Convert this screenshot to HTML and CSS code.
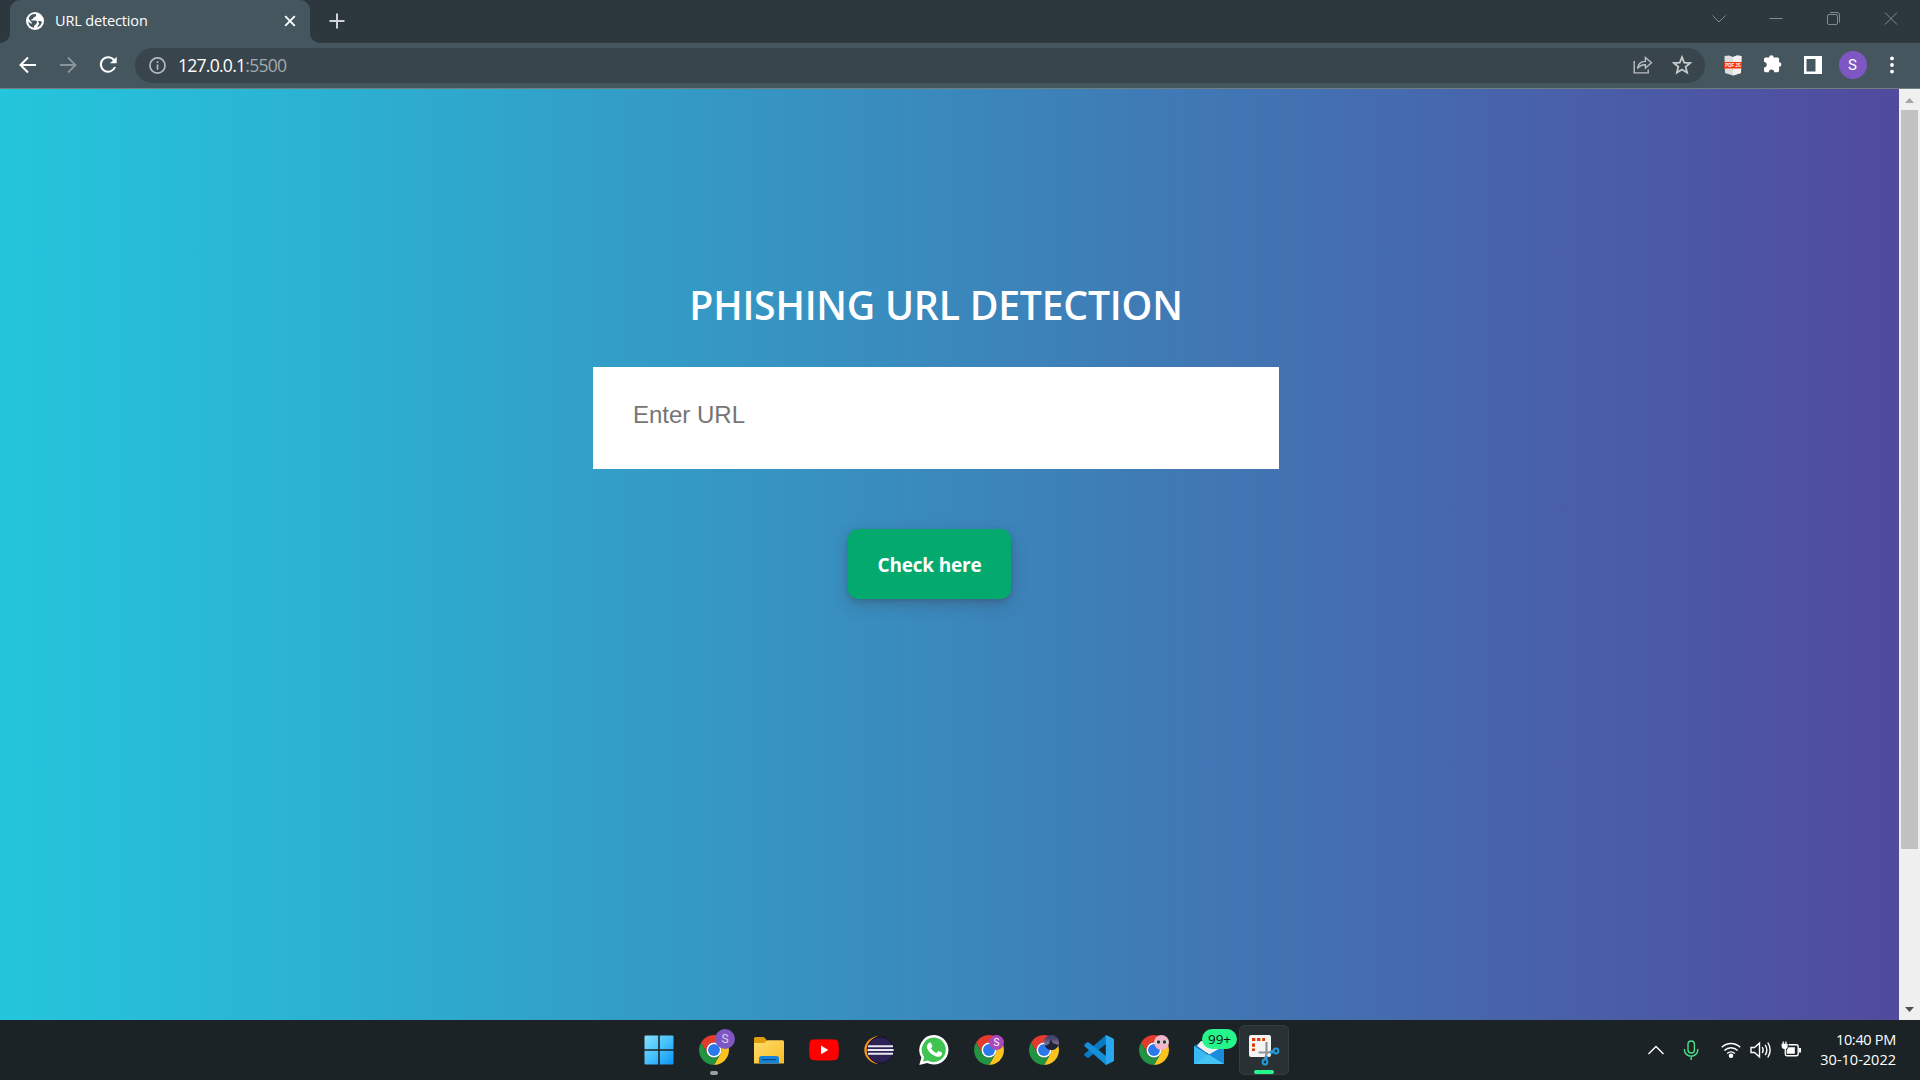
FILE: index.html
```html
<!DOCTYPE html>
<html lang="en">
<head>
<meta charset="utf-8">
<title>URL detection</title>
<link rel="stylesheet" href="styles.css">
</head>
<body>
<svg class="defs" width="0" height="0" aria-hidden="true">
  <symbol id="chrome" viewBox="0 0 48 48">
    <path fill="#e33b2e" d="M24 12H44.78A24 24 0 0 0 3.22 12L13.61 30A12 12 0 0 1 24 12Z"/>
    <path fill="#fcc31e" d="M44.78 12A24 24 0 0 1 24 48L34.39 30A12 12 0 0 0 24 12Z"/>
    <path fill="#229342" d="M24 48A24 24 0 0 1 3.22 12L13.61 30A12 12 0 0 0 34.39 30Z"/>
    <circle cx="24" cy="24" r="12" fill="#fff"/>
    <circle cx="24" cy="24" r="9.5" fill="#2b78ec"/>
  </symbol>
  <linearGradient id="win" x1="0" y1="0" x2="1" y2="1"><stop offset="0" stop-color="#88e0ff"/><stop offset=".5" stop-color="#45c2fb"/><stop offset="1" stop-color="#0b93f5"/></linearGradient>
  <linearGradient id="folder" x1="0" y1="0" x2="1" y2="1"><stop offset="0" stop-color="#ffdc6b"/><stop offset="1" stop-color="#f9bd25"/></linearGradient>
</svg>

<header class="tabstrip">
  <div class="strip-start"><i class="curve curve-left"></i></div>
  <div class="tab">
    <svg class="favicon" viewBox="0 0 18 18"><circle cx="9" cy="9" r="9" fill="#fff"/><path fill="#45565f" d="M10 2.2C10.8 3.8 9.4 5 7.6 5.2 7.6 6.6 6.6 7 5.4 7.2V8.6H9.6C11.2 8.8 11.6 10.4 10.4 11.4 10 12.8 8.4 13 8 14.2V15.8A7 7 0 0 1 2.2 9.6L5.4 12 5.8 10.4 3.4 7.8 2.6 6.4A7 7 0 0 1 10 2.2ZM15.9 9.6A7 7 0 0 1 11.4 15.4C11.4 13.6 13 13 13.2 11.2 12.2 10.4 12 9.4 12.8 8.8Z"/></svg>
    <span class="tab-title">URL detection</span>
    <svg class="tab-close" viewBox="0 0 12 12"><path d="M1.2 1.2 10.8 10.8M10.8 1.2 1.2 10.8" stroke="#fff" stroke-width="1.9"/></svg>
  </div>
  <div class="strip-rest"><i class="curve curve-right"></i>
    <svg class="plus" viewBox="0 0 16 16"><path d="M8 .5V15.5M.5 8H15.5" stroke="#cfd3d5" stroke-width="2"/></svg>
  </div>
  <div class="window-controls">
    <svg viewBox="0 0 16 16"><path d="M1.5 4.5 8 11 14.5 4.5"/></svg>
    <svg viewBox="0 0 16 16"><path d="M1.5 7.5H14.5"/></svg>
    <svg viewBox="0 0 16 16"><rect x="1.5" y="3.5" width="10" height="10" rx="1.5"/><path d="M4 1.5H11Q13.5 1.5 13.5 4V11.5"/></svg>
    <svg viewBox="0 0 16 16"><path d="M2 1.5 14 13.5M14 1.5 2 13.5"/></svg>
  </div>
</header>

<nav class="toolbar">
  <div class="nav-buttons">
    <svg viewBox="0 0 18 18"><path d="M17 9H2M9 1.5 1.5 9 9 16.5" stroke="#fff" stroke-width="2"/></svg>
    <svg viewBox="0 0 18 18"><path d="M1 9H16M9 1.5 16.5 9 9 16.5" stroke="#8a969b" stroke-width="1.8"/></svg>
    <svg viewBox="0 0 18 18"><path d="M15.3 4.5A7.3 7.3 0 1 0 16 11" stroke="#fff" stroke-width="2"/><path d="M17.7 .7V7.3H11Z" fill="#fff"/></svg>
  </div>
  <div class="omnibox">
    <svg class="info" viewBox="0 0 16 16"><circle cx="8" cy="8" r="7.1"/><path d="M8 7V12M8 4V5.7"/></svg>
    <span class="url">127.0.0.1<span class="port">:5500</span></span>
    <svg class="share" viewBox="0 0 20 18"><path d="M1.2 5V16.9H15.2V13.5"/><path d="M4.5 12.5C5 8 7.6 5.6 12.4 5.4V1.5L18.5 6.8 12.4 12V8.7C8.7 8.5 6.5 9.5 4.5 12.5Z"/></svg>
    <svg class="star" viewBox="0 0 18 18"><path d="M9 1.9 11 6.8 16.4 7.2 12.3 10.7 13.6 15.9 9 13.1 4.4 15.9 5.7 10.7 1.6 7.2 7 6.8Z"/></svg>
  </div>
  <div class="extensions">
    <svg class="pdf" viewBox="0 0 18 21"><path d="M.5 1 5 .5 9 2 13 .5 17.5 1 17 18 9 20.5 1 18Z" fill="#dcdddd"/><path d="M9 2 13 .5 17.5 1 17 18 9 20.5Z" fill="#f1f1f1"/><rect y="7" width="18" height="6.5" fill="#f9340e"/><text x="9" y="12.2" text-anchor="middle" textLength="15.5" lengthAdjust="spacingAndGlyphs">PDF JS</text></svg>
    <svg class="puzzle" viewBox="0 0 18 19"><path fill="#fff" d="M5.1 3.5A2.3 2.3 0 0 1 9.7 3.5H13.5A1.6 1.6 0 0 1 15.1 5.1V8.2A2.3 2.3 0 0 1 15.1 12.8V16.6A1.6 1.6 0 0 1 13.5 18.2H10.2A2.7 2.7 0 0 0 4.8 18.2H1.6A1.6 1.6 0 0 1 0 16.6V13.4A2.7 2.7 0 0 0 0 8V5.1A1.6 1.6 0 0 1 1.6 3.5Z"/></svg>
    <svg class="panel" viewBox="0 0 18 18"><path fill="#fff" fill-rule="evenodd" d="M0 0H18V18H0ZM2.5 3V15.5H11.5V3Z"/></svg>
    <span class="avatar">S</span>
    <svg class="dots" viewBox="0 0 6 18"><circle cx="3" cy="2.4" r="1.9"/><circle cx="3" cy="9" r="1.9"/><circle cx="3" cy="15.6" r="1.9"/></svg>
  </div>
</nav>

<div class="viewport">
  <main class="page">
    <h1>PHISHING URL DETECTION</h1>
    <input class="url-input" type="text" placeholder="Enter URL">
    <button class="check" type="button">Check here</button>
  </main>
  <aside class="scrollbar">
    <svg viewBox="0 0 9 5"><path d="M0 5 4.5 0 9 5Z" fill="#a3a3a3"/></svg>
    <div class="thumb"></div>
    <svg class="down" viewBox="0 0 9 5"><path d="M0 0 4.5 5 9 0Z" fill="#505050"/></svg>
  </aside>
</div>

<footer class="taskbar">
  <div class="apps">
    <div class="app"><svg viewBox="0 0 30 30"><path fill="url(#win)" d="M.5 1.5Q.5 .5 1.5 .5H14.2V14.2H.5ZM15.8 .5H28.5Q29.5 .5 29.5 1.5V14.2H15.8ZM.5 15.8H14.2V29.5H1.5Q.5 29.5 .5 28.5ZM15.8 15.8H29.5V28.5Q29.5 29.5 28.5 29.5H15.8Z"/></svg></div>
    <div class="app"><svg><use href="#chrome"/></svg><span class="profile large">S</span><i class="running"></i></div>
    <div class="app"><svg viewBox="0 0 30 30"><path fill="#e09c0b" d="M0 3.5Q0 2 1.5 2H9Q10.3 2 11 3L13 5.5V10H0Z"/><path fill="url(#folder)" d="M0 8H8.5Q10.5 8 12 6.5L13.5 5.3H28.5Q30 5.3 30 6.8V28.5H0Z"/><path fill="#1683d8" d="M5 28.5V23.5Q5 21 7.5 21H22.5Q25 21 25 23.5V28.5Z"/><path d="M8.5 24.6H21.5" stroke="#074b87" stroke-width="1.3" stroke-linecap="round"/></svg></div>
    <div class="app"><svg viewBox="0 0 30 30"><path fill="red" d="M4 4.6Q15 3.8 26 4.6 29 4.9 29.4 8 30.4 15 29.4 21.5 29 24.7 26 25 15 26 4 25 1 24.7.6 21.5-.4 15 .6 8 1 4.9 4 4.6Z"/><path fill="#fff" d="M12 10.5V19.3L19.3 14.9Z"/></svg></div>
    <div class="app"><svg viewBox="0 0 30 30"><path fill="#f7941e" d="M14 1C6 2 .3 8 .3 15S6 28 14 29C8 26 4.5 21 4.5 15S8 4 14 1Z"/><circle cx="16.3" cy="15" r="13.2" fill="#2c2255" stroke="#151126"/><path d="M4 11.2H29M3.5 15H29.7M4 18.8H29" stroke="#e9e8ef" stroke-width="2"/></svg></div>
    <div class="app"><svg viewBox="0 0 30 30"><path fill="#fff" d="M15.3 0A14.8 14.8 0 1 1 8.2 28.1L.3 30 2.4 22.4A14.8 14.8 0 0 1 15.3 0Z"/><path fill="#40c351" d="M15.3 2.6A12.2 12.2 0 1 1 8.6 25.4L4 26.6 5.2 22.1A12.2 12.2 0 0 1 15.3 2.6Z"/><path fill="#fff" d="M10.2 7.8Q11.7 7.2 12.1 8.2L13.3 11Q13.5 11.7 12 13.2 14 16.8 17.4 18.2L19 16.3Q19.4 15.9 20.1 16.2L22.8 17.6Q23.4 18 22.8 19.8C21.8 22 18.7 22.6 15 20.6 11.5 18.8 9 15.5 8.1 13.2 7.4 11.2 8.5 8.8 10.2 7.8Z"/></svg></div>
    <div class="app"><svg><use href="#chrome"/></svg><span class="profile">S</span></div>
    <div class="app"><svg><use href="#chrome"/></svg><svg class="profile scenic" viewBox="0 0 15 15"><path fill="#1d2438" d="M0 11 5 9 7 4 8.5 8 15 10V15H0Z"/></svg></div>
    <div class="app"><svg viewBox="0 0 30 30"><path fill="#0a79c4" d="M22 0V9L4.5 22.7Q3.8 23.2 3 22.6L.5 20.4Q-.2 19.6.6 18.8Z"/><path fill="#168fda" d="M22 30V21L4.5 7.3Q3.8 6.8 3 7.4L.5 9.6Q-.2 10.4.6 11.2Z"/><path fill="#2aa6ee" d="M22 0 28.8 3.2Q30 3.8 30 5V25Q30 26.2 28.8 26.8L22 30Q21.2 29.5 21.8 28.4V1.6Q21.5 .5 22 0Z"/></svg></div>
    <div class="app"><svg><use href="#chrome"/></svg><svg class="profile pink" viewBox="0 0 15 15"><ellipse cx="4" cy="7" rx="2.8" ry="2.2" fill="#ddd"/><ellipse cx="11" cy="7" rx="2.8" ry="2.2" fill="#ddd"/><circle cx="4.5" cy="7" r="1.7" fill="#333"/><circle cx="10.5" cy="7" r="1.7" fill="#333"/></svg></div>
    <div class="app"><svg viewBox="0 0 30 30"><path fill="#176fc0" d="M0 11 15 2 30 11V18H0Z"/><path fill="#f1f1f1" d="M3 11 7 6H25L28 12 16 20Z"/><path fill="#39b9f2" d="M0 11 30 29H0Z"/><path fill="#1c8bdc" d="M30 11V29H28L14 20Z"/><path fill="#45c3f5" d="M0 29 14.5 19.5 30 29Z"/></svg><span class="count">99+</span></div>
    <div class="app active"><svg viewBox="0 0 30 30"><rect width="22" height="22" rx="2" fill="#f4f4f4"/><path d="M3 4.5H16M4.5 8.5V16" stroke="#d83b01" stroke-width="3" stroke-dasharray="3.3 1.8" fill="none"/><path d="M17.5 7V19L16 24M9.5 17.5H19L25 16" stroke="#8d9397" stroke-width="2.2" fill="none"/><circle cx="16" cy="27" r="2.4" stroke="#219be0" stroke-width="2" fill="none"/><circle cx="27" cy="16" r="2.4" stroke="#219be0" stroke-width="2" fill="none"/><path d="M17 24.5 18 21M24 17 21 18" stroke="#219be0" stroke-width="2.5"/></svg><i class="running"></i></div>
  </div>
  <div class="tray">
    <svg class="up" viewBox="0 0 18 18"><path d="M1.5 13 9 5.5 16.5 13"/></svg>
    <svg class="mic" viewBox="0 0 16 22"><rect x="5" y="2" width="6.4" height="12" rx="3.2"/><path d="M1.5 10V11.2A6.5 5.8 0 0 0 14.7 11.2V10M8.2 17V21"/></svg>
    <svg class="wifi" viewBox="0 0 20 20"><path d="M.8 7.3A13 13 0 0 1 19.2 7.3M3.4 10.4A9.4 9.4 0 0 1 16.6 10.4M6.2 13.4A5.5 5.5 0 0 1 13.8 13.4"/><circle cx="10" cy="15.7" r="1.6" fill="#fff"/></svg>
    <svg class="volume" viewBox="0 0 22 20"><path d="M1 7.5H4.5L9.5 3V17L4.5 12.5H1ZM12.3 7Q14 10 12.3 13M15.2 4.8Q18.5 10 15.2 15.2M17.8 2.5Q22.5 10 17.8 17.5"/></svg>
    <svg class="battery" viewBox="0 0 22 20"><path d="M8 4.5H16Q18 4.5 18 6.5V14Q18 16 16 16H6Q4.5 16 4.5 14.5V8"/><path fill="#fff" stroke="none" d="M.5 3.5H1.7V1H3V3.5H4.5V1H5.8V3.5H7V7Q6 9 4 9 1.5 9 .8 7ZM8 7H14.5V14H6V10ZM18.5 8H21V12.5H18.5Z"/></svg>
    <div class="clock"><span class="time">10:40 PM</span><span class="date">30-10-2022</span></div>
  </div>
</footer>
</body>
</html>
```
FILE: styles.css
```css
* { box-sizing: border-box; }
body {
  margin: 0;
  width: 1920px;
  height: 1080px;
  overflow: hidden;
  display: flex;
  flex-direction: column;
  font-family: "Open Sans", "Noto Sans", sans-serif;
  color: #fff;
}
svg { display: block; fill: none; flex: none; overflow: visible; }
.defs { position: absolute; }

/* Tab strip */
.tabstrip { height: 43px; flex: none; display: flex; background: #2d383e; }
.strip-start { width: 10px; background: #45565f; }
.curve { display: block; background: #2d383e; height: 43px; }
.curve-left { width: 10px; border-bottom-right-radius: 10px; }
.tab {
  width: 300px;
  display: flex;
  align-items: center;
  padding: 0 14px 1px 16px;
  background: #45565f;
  border-radius: 10px 10px 0 0;
}
.favicon { width: 18px; height: 18px; }
.tab-title { margin-left: 11px; padding-bottom: 1px; font-size: 14.5px; letter-spacing: -.15px; white-space: nowrap; }
.tab-close { width: 12px; height: 12px; margin-left: auto; }
.strip-rest {
  flex: 1;
  display: flex;
  align-items: center;
  background: linear-gradient(90deg, #45565f 12px, #2d383e 12px);
}
.curve-right { width: 14px; border-bottom-left-radius: 10px; }
.plus { width: 16px; height: 16px; margin: 0 0 1px 5px; }
.window-controls { display: flex; gap: 41.3px; padding: 11px 21px 0 0; }
.window-controls svg { width: 16px; height: 16px; stroke: #838b90; stroke-width: 1; }

/* Toolbar */
.toolbar {
  height: 46px;
  flex: none;
  display: flex;
  align-items: center;
  padding-bottom: 1px;
  background: #45565f;
  border-bottom: 1px solid #707e84;
}
.nav-buttons { width: 135px; display: flex; gap: 22px; padding-left: 18.5px; }
.nav-buttons svg { width: 18px; height: 18px; }
.omnibox {
  width: 1570px;
  height: 35px;
  display: flex;
  align-items: center;
  padding: 0 13px 0 14px;
  border-radius: 18px;
  background: #39454c;
}
.info { width: 17px; height: 17px; stroke: #b3b9bc; stroke-width: 1.6; }
.url { margin-left: 12px; font-size: 17.6px; letter-spacing: -.77px; }
.port { color: #a2aaae; }
.share { width: 20px; height: 18px; margin-left: auto; stroke: #b9bec1; stroke-width: 1.4; }
.star { width: 20px; height: 20px; margin-left: 19px; stroke: #c9cccd; stroke-width: 1.6; }
.extensions { display: flex; align-items: center; padding-left: 18.5px; }
.pdf { width: 18px; height: 21px; }
.pdf text { font: bold 6px "Liberation Sans", sans-serif; fill: #fff; }
.puzzle { width: 18px; height: 19px; margin: 0 0 3px 22px; }
.panel { width: 18px; height: 18px; margin-left: 22px; }
.avatar {
  width: 28px;
  height: 28px;
  margin-left: 17px;
  border-radius: 50%;
  background: #7e57c2;
  font: 15px/28px Roboto, sans-serif;
  text-align: center;
}
.dots { width: 6px; height: 18px; margin-left: 22.5px; fill: #fff; }

/* Web page */
.viewport { height: 931px; flex: none; display: flex; }
.page {
  width: 1899px;
  display: flex;
  flex-direction: column;
  align-items: center;
  padding: 187px 27px 0 0;
  background: linear-gradient(to right, #24c6dc, #514a9d);
}
h1 { margin: 0; font-size: 39.2px; font-weight: 600; line-height: 58px; letter-spacing: -.23px; white-space: nowrap; }
.url-input {
  width: 686px;
  height: 102px;
  margin-top: 33px;
  padding: 0 40px 6px;
  border: 0;
  background: #fff;
  font: 24px "Liberation Sans", sans-serif;
}
.url-input::placeholder { color: #757575; }
.check {
  width: 163px;
  height: 70px;
  margin: 60px 13px 0 0;
  padding: 1px 0 0;
  border: 0;
  border-radius: 10px;
  background: #04aa6d;
  box-shadow: 0 6px 16px rgba(60, 60, 80, .3), 0 2px 4px rgba(60, 60, 80, .25);
  color: #fff;
  font: 700 19px "Open Sans", sans-serif;
  letter-spacing: -.2px;
  white-space: nowrap;
}
.scrollbar {
  width: 21px;
  display: flex;
  flex-direction: column;
  align-items: center;
  padding: 9px 0 8px;
  background: #f0f0f0;
}
.scrollbar svg { width: 9px; height: 5px; }
.thumb { width: 17px; height: 739px; margin-top: 7px; background: #c1c1c1; }
.scrollbar .down { margin-top: auto; }

/* Taskbar */
.taskbar { height: 60px; flex: none; display: flex; justify-content: space-between; background: #1c2326; }
.apps { display: flex; padding-left: 631px; }
.app { position: relative; width: 55px; height: 60px; display: flex; align-items: center; justify-content: center; }
.app > svg { width: 30px; height: 30px; }
.app.active { width: 50px; height: 50px; margin: 5px 0 0 3px; border: 1px solid #363d40; border-radius: 5px; background: #2a3134; }
.running { position: absolute; left: 24px; bottom: 5px; width: 8px; height: 4px; border-radius: 2px; background: #9a9fa1; }
.active .running { left: 14px; bottom: 0; width: 20px; background: #26f58b; }
.profile {
  position: absolute;
  top: 15px;
  right: 12px;
  width: 15px;
  height: 15px;
  border-radius: 50%;
  background: #ab47bc;
  font: 10px/15px Roboto, sans-serif;
  text-align: center;
}
.profile.large { top: 9px; right: 6px; width: 20px; height: 20px; background: #7e57c2; font-size: 12px; line-height: 20px; color: #ddd0f2; }
.app > svg.profile { width: 15px; height: 15px; overflow: hidden; }
.scenic { background: linear-gradient(#44436d 20%, #8e789d 70%, #343c59 80%); }
.pink { background: #f3b4cb; }
.count {
  position: absolute;
  z-index: 1;
  top: 9px;
  left: 21px;
  width: 35px;
  height: 20px;
  border-radius: 10px;
  background: #26f58b;
  color: #111;
  font-size: 13.5px;
  line-height: 20px;
  text-align: center;
}
.tray { display: flex; align-items: center; padding-right: 24px; }
.tray svg { stroke: #fff; stroke-width: 1.4; }
.up { width: 18px; height: 18px; }
.tray .mic { width: 16px; height: 22px; margin-left: 18px; stroke: #4ade8a; }
.wifi { width: 20px; height: 20px; margin-left: 22px; }
.volume { width: 22px; height: 20px; margin-left: 9px; }
.battery { width: 21px; height: 20px; margin-left: 9px; }
.clock { width: 94px; display: flex; flex-direction: column; align-items: flex-end; font-size: 14.5px; line-height: 20px; white-space: nowrap; }
.time { letter-spacing: -.3px; }
.date { letter-spacing: 0; }
```
